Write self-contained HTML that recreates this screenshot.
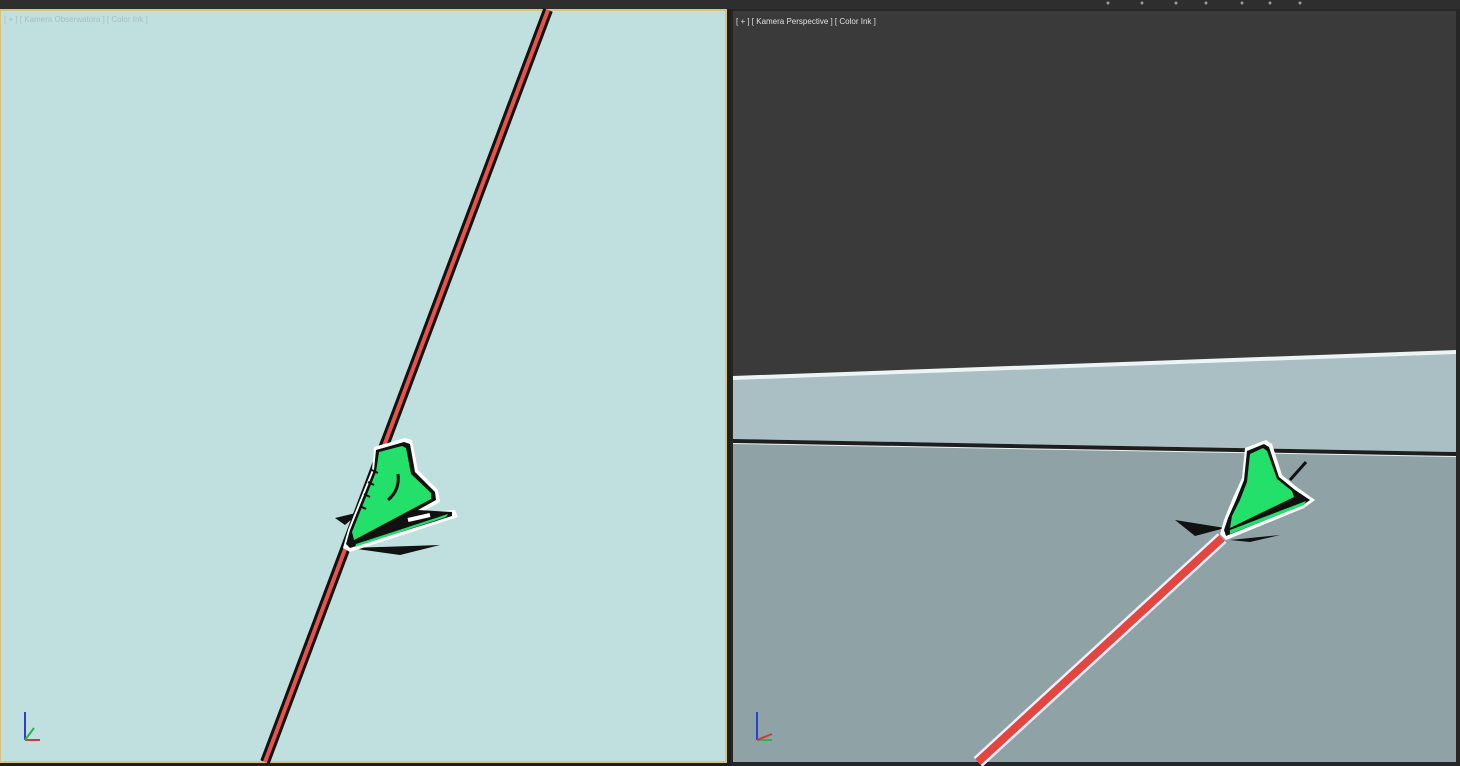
<!DOCTYPE html>
<html><head><meta charset="utf-8"><style>
html,body{margin:0;padding:0;background:#1e1e1e;width:1460px;height:766px;overflow:hidden}
svg{display:block}
text{font-family:"Liberation Sans",sans-serif}
</style></head><body>
<svg width="1460" height="766" viewBox="0 0 1460 766" xmlns="http://www.w3.org/2000/svg">
<rect width="1460" height="766" fill="#1f1f1f"/>
<rect x="0" y="0" width="1460" height="9" fill="#2e2e2e"/>
<g fill="#9a9a9a"><circle cx="1108" cy="3" r="1.5"/><circle cx="1142" cy="3" r="1.5"/><circle cx="1176" cy="3" r="1.5"/><circle cx="1206" cy="3" r="1.5"/><circle cx="1242" cy="3" r="1.5"/><circle cx="1270" cy="3" r="1.5"/><circle cx="1300" cy="3" r="1.5"/></g>
<!-- left viewport -->
<rect x="0" y="9" width="727" height="754" fill="#d9c27a"/>
<rect x="1" y="11" width="724" height="750" fill="#c0dfdf"/>
<text x="4" y="22" font-size="8" fill="#a8c0c0">[ + ] [ Kamera Obserwatora ] [ Color Ink ]</text>
<!-- right viewport -->
<rect x="731" y="9" width="729" height="757" fill="#262626"/>
<rect x="733" y="11" width="723" height="751" fill="#3a3a3a"/>
<polygon points="733,376 1456,350 1456,762 733,762" fill="#ecf4f4"/>
<polygon points="733,380 1456,354 1456,452 733,439" fill="#a9bfc4"/>
<polygon points="733,439 1456,452 1456,456 733,443" fill="#1e1e1e"/>
<polygon points="733,444 1456,457 1456,762 733,762" fill="#8fa3a7"/>
<text x="736" y="24" font-size="8" fill="#e0e0e0">[ + ] [ Kamera Perspective ] [ Color Ink ]</text>
<!-- left red line -->
<line x1="548" y1="10" x2="265" y2="762" stroke="#111" stroke-width="10"/>
<line x1="548" y1="10" x2="265" y2="762" stroke="#e8524a" stroke-width="4"/>
<!-- right red line -->
<line x1="1222" y1="538" x2="978" y2="762" stroke="#eef" stroke-width="13"/>
<line x1="1222" y1="538" x2="978" y2="762" stroke="#e2463f" stroke-width="8"/>
<!-- left skate -->
<g>
<path d="M335,518 L360,512 L345,525 Z M350,548 L440,545 L400,555 Z" fill="#111"/>
<path d="M374,447 L405,438 L412,440 L418,470 L438,490 L440,502 L422,512 L455,510 L458,517 L350,552 L343,548 L348,530 L360,500 L372,470 Z" fill="#fff"/>
<path d="M376,450 L404,442 L410,444 L415,472 L435,492 L436,500 L418,510 L452,512 L452,516 L350,548 L346,544 L350,530 L362,500 L374,470 Z" fill="#111"/>
<path d="M379,452 L402,446 L406,448 L411,474 L431,493 L431,499 L354,540 L352,532 L364,502 L376,472 Z" fill="#22e06a"/>
<path d="M356,544 L448,514 L446,517 L355,547 Z" fill="#22e06a"/>
<path d="M388,500 Q400,490 398,474" stroke="#111" stroke-width="3" fill="none"/>
<path d="M372,470 l6,3 M368,482 l6,3 M364,494 l6,3 M360,506 l6,3" stroke="#111" stroke-width="2"/>
<path d="M408,520 L430,515" stroke="#fff" stroke-width="4"/>
</g>
<!-- right skate -->
<g>
<path d="M1175,520 L1225,528 L1195,536 Z M1230,540 L1280,535 L1250,542 Z" fill="#111"/>
<path d="M1245,448 L1266,440 L1272,444 L1282,475 L1298,488 L1315,500 L1304,508 L1226,540 L1220,534 L1224,520 L1232,500 L1242,478 Z" fill="#fff"/>
<path d="M1247,451 L1264,444 L1269,447 L1279,477 L1295,490 L1310,500 L1303,505 L1226,536 L1224,530 L1228,518 L1236,500 L1244,480 Z" fill="#111"/>
<path d="M1250,454 L1263,448 L1267,451 L1277,479 L1292,491 L1294,497 L1230,528 L1232,516 L1240,500 L1247,482 Z" fill="#22e06a"/>
<path d="M1230,530 L1306,501 L1304,505 L1230,534 Z" fill="#22e06a"/>
<line x1="1290" y1="480" x2="1306" y2="462" stroke="#111" stroke-width="3"/>
</g>
<!-- axis icons -->
<g stroke-width="2" fill="none">
<line x1="25" y1="740" x2="25" y2="712" stroke="#2b3fd6"/>
<line x1="25" y1="740" x2="40" y2="740" stroke="#d23a3a"/>
<line x1="25" y1="740" x2="34" y2="728" stroke="#2db34a"/>
<line x1="757" y1="740" x2="757" y2="712" stroke="#2b3fd6"/>
<line x1="757" y1="740" x2="772" y2="740" stroke="#2db34a"/>
<line x1="757" y1="740" x2="772" y2="734" stroke="#d23a3a"/>
</g>
</svg>
</body></html>
